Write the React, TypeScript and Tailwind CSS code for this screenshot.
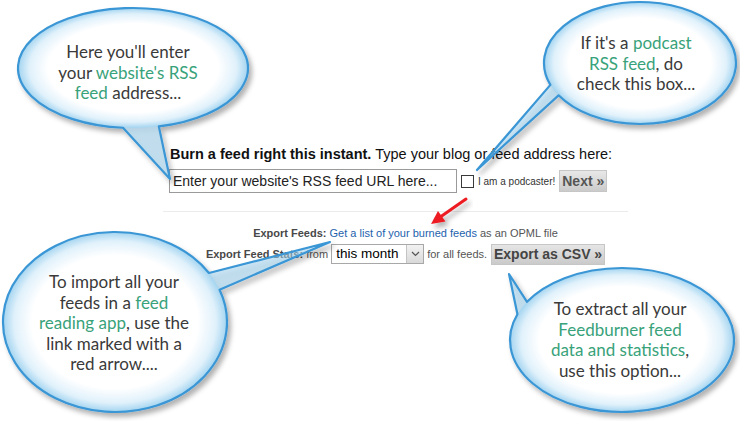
import React from 'react'

type Bubble = { id: string; cx: number; cy: number; rx: number; ry: number; a1: number; a2: number; tip: [number, number] }

const BUBBLES: Bubble[] = [
  { id: 'b1', cx: 133, cy: 68, rx: 115, ry: 60, a1: 95, a2: 77, tip: [170, 179] },
  { id: 'b2', cx: 640, cy: 63, rx: 96, ry: 61, a1: 159, a2: 148, tip: [477, 170] },
  { id: 'b3', cx: 115, cy: 322, rx: 112, ry: 90, a1: -21, a2: -33, tip: [330, 242] },
  { id: 'b4', cx: 622, cy: 340, rx: 112, ry: 72, a1: 212, a2: 201, tip: [509, 274] },
]

function bubblePath(b: Bubble) {
  const pt = (a: number) => [b.cx + b.rx * Math.cos((a * Math.PI) / 180), b.cy + b.ry * Math.sin((a * Math.PI) / 180)]
  const [x1, y1] = pt(b.a1)
  const [x2, y2] = pt(b.a2)
  return `M${x1} ${y1} A${b.rx} ${b.ry} 0 1 1 ${x2} ${y2} L${b.tip[0]} ${b.tip[1]} Z`
}

function G({ children }: { children: React.ReactNode }) {
  return <span className="text-[#38a27a]">{children}</span>
}

function Overlay() {
  return (
    <svg className="absolute inset-0 pointer-events-none" width="740" height="421" viewBox="0 0 740 421">
      <defs>
        <filter id="shadow" x="-20%" y="-20%" width="140%" height="150%">
          <feDropShadow dx="3" dy="4" stdDeviation="2.5" floodColor="#000" floodOpacity="0.3" />
        </filter>
        {BUBBLES.map(b => (
          <radialGradient key={b.id} id={`g-${b.id}`} gradientUnits="userSpaceOnUse" cx="0" cy="0" r="1"
            gradientTransform={`translate(${b.cx} ${b.cy}) scale(${b.rx} ${b.ry})`}>
            <stop offset="0" stopColor="#ffffff" />
            <stop offset="0.74" stopColor="#ffffff" />
            <stop offset="0.9" stopColor="#e0f1fb" />
            <stop offset="1" stopColor="#a3d4f0" />
          </radialGradient>
        ))}
      </defs>
      {BUBBLES.map(b => (
        <g key={b.id} filter="url(#shadow)">
          <ellipse cx={b.cx} cy={b.cy} rx={b.rx} ry={b.ry} fill={`url(#g-${b.id})`} />
          {/* tail is see-through, like the original overlay */}
          <path d={bubblePath(b)} fill={`url(#g-${b.id})`} fillOpacity="0.55" stroke="#3a96d5" strokeWidth="2.2"
            strokeLinejoin="round" />
        </g>
      ))}
      {/* red arrow */}
      <g filter="url(#shadow)">
        <line x1="466" y1="199" x2="441" y2="216.5" stroke="#ec1c24" strokeWidth="3" strokeLinecap="round" />
        <polygon points="431,224 445.5,221.5 438,211" fill="#ec1c24" />
      </g>
    </svg>
  )
}

function BubbleText() {
  const base = "absolute text-center font-['Lato',sans-serif] text-[17px] leading-[20.5px] text-[#3a3a3a]"
  return (
    <>
      <div className={`${base} left-[42px] top-[42px] w-[172px]`}>
        Here you'll enter<br />your <G>website's RSS</G><br /><G>feed</G> address...
      </div>
      <div className={`${base} left-[551px] top-[33px] w-[170px]`}>
        If it's a <G>podcast</G><br /><G>RSS feed</G>, do<br />check this box...
      </div>
      <div className={`${base} left-[19px] top-[272px] w-[190px]`}>
        To import all your<br />feeds in a <G>feed</G><br /><G>reading app</G>, use the<br />link marked with a<br />red arrow....
      </div>
      <div className={`${base} left-[535px] top-[299px] w-[170px]`}>
        To extract all your<br /><G>Feedburner feed</G><br /><G>data and statistics</G>,<br />use this option...
      </div>
    </>
  )
}

export default function App() {
  return (
    <div className="relative w-[740px] h-[421px] overflow-hidden bg-white font-['Liberation_Sans',Arial,sans-serif]">
      <div className="ml-[163px] pt-[146px]">
        <p className="pl-[7px] text-[14.5px] leading-[16px] text-[#111]">
          <b>Burn a feed right this instant.</b> Type your blog or feed address here:
        </p>

        <div className="mt-[7px] pl-[6px] flex items-center h-[24px]">
          <div className="w-[288px] h-[24px] border border-[#9a9a9a] bg-white flex items-center pl-[3px] text-[14px] text-[#222] whitespace-nowrap">
            Enter your website's RSS feed URL here...
          </div>
          <div className="ml-[4px] w-[13px] h-[13px] border border-[#3a3a3a] bg-white" />
          <span className="ml-[4px] text-[10px] text-[#333] whitespace-nowrap">I am a podcaster!</span>
          <div className="ml-[4px] w-[48px] h-[22px] flex items-center justify-center border border-[#c6c6c6] bg-gradient-to-b from-[#e8e8e8] to-[#cbcbcb] text-[14px] font-bold text-[#555] whitespace-nowrap">
            Next »
          </div>
        </div>

        <div className="mt-[18px] w-[465px] border-t border-[#ebebeb]" />

        <div className="w-[485px] flex flex-col items-center text-[11px] text-[#555] whitespace-nowrap">
          <div className="mt-[14px] h-[14px] leading-[14px]">
            <b className="text-[#484848]">Export Feeds:</b>{' '}
            <span className="text-[#1d62ad]">Get a list of your burned feeds</span> as an OPML file
          </div>
          <div className="mt-[3px] flex items-center h-[22px]">
            <span><b className="text-[#484848]">Export Feed Stats:</b> from</span>
            <div className="ml-[3px] w-[93px] h-[20px] flex border border-[#a8a8a8] bg-white">
              <span className="flex-1 pl-[4px] text-[13.5px] leading-[18px] text-black">this month</span>
              <div className="w-[17px] h-full border-l border-[#c4c4c4] bg-gradient-to-b from-[#f2f2f2] to-[#d9d9d9] flex items-center justify-center">
                <svg width="9" height="6" viewBox="0 0 9 6">
                  <path d="M1 1 L4.5 4.5 L8 1" fill="none" stroke="#555" strokeWidth="1.2" />
                </svg>
              </div>
            </div>
            <span className="ml-[3px]">for all feeds.</span>
            <div className="ml-[4px] w-[114px] h-[21px] flex items-center justify-center border border-[#c6c6c6] bg-gradient-to-b from-[#e6e6e6] to-[#cacaca] text-[14px] font-bold text-[#444]">
              Export as CSV »
            </div>
          </div>
        </div>
      </div>

      <Overlay />
      <BubbleText />
    </div>
  )
}
